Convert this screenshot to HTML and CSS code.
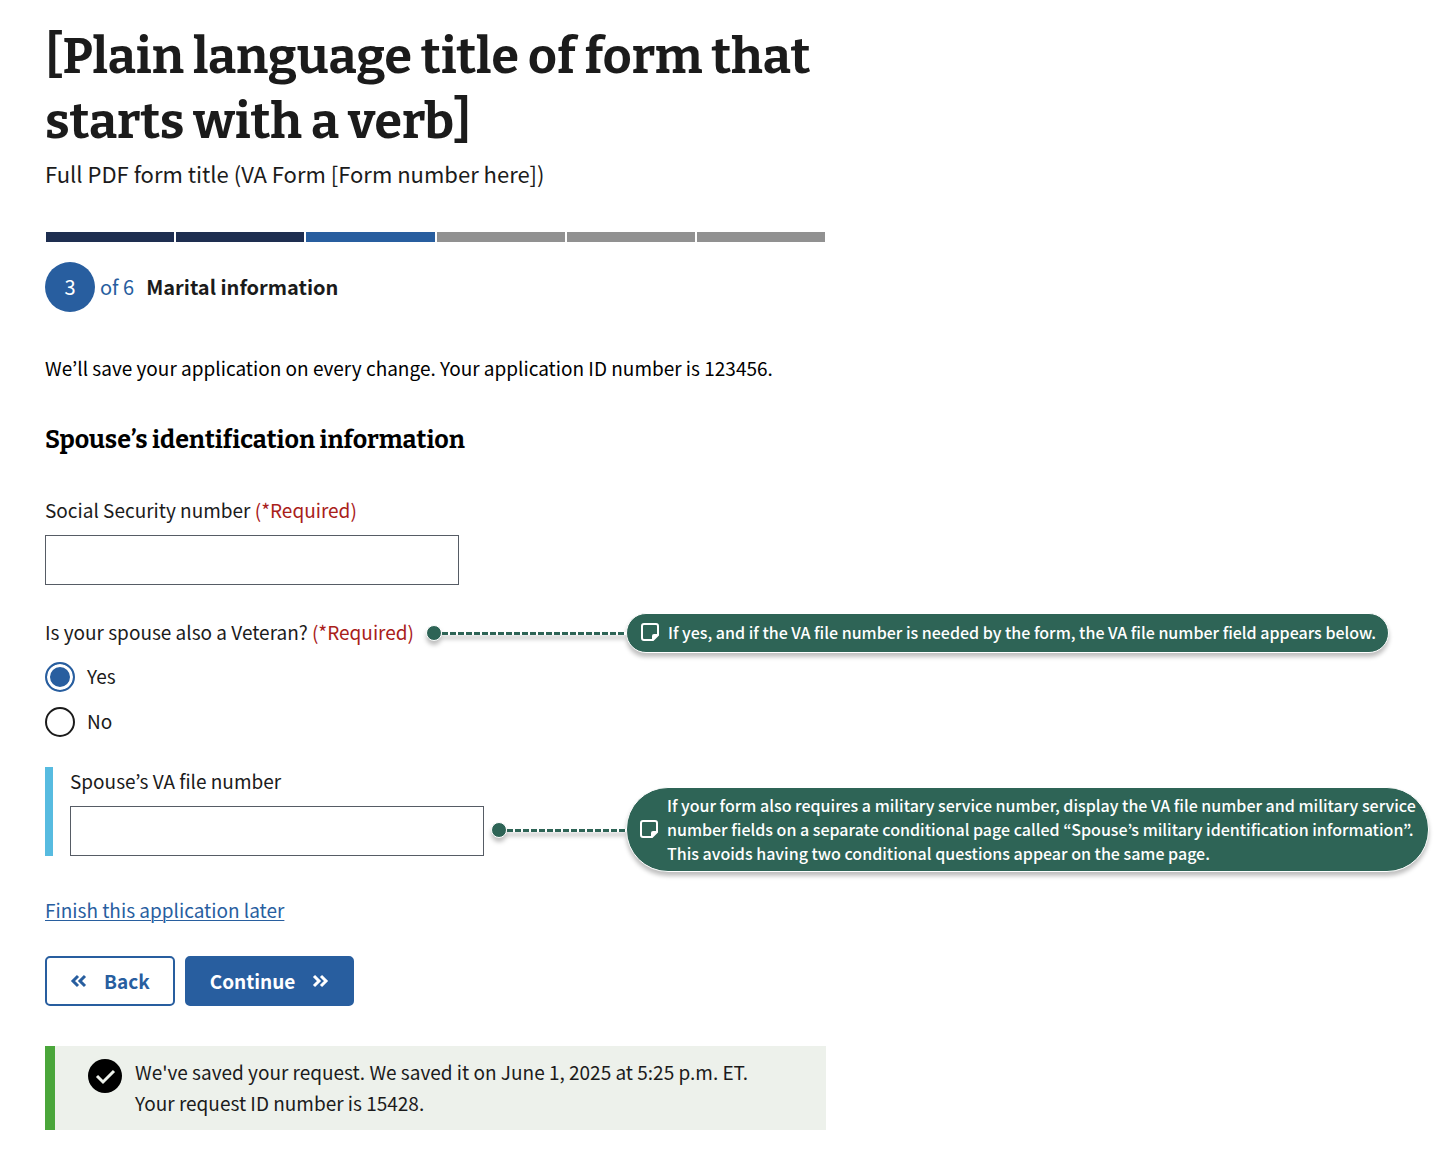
FILE: index.html
```html
<!DOCTYPE html>
<html lang="en">
<head>
  <meta charset="utf-8">
  <meta name="viewport" content="width=device-width, initial-scale=1">
  <title>Spouse’s identification information</title>
  <link rel="stylesheet" href="styles.css">
</head>
<body>
  <main class="page">
    <header class="intro">
      <h1 class="title">[Plain language title of form that starts with a verb]</h1>
      <p class="subtitle">Full PDF form title (VA Form [Form number here])</p>
    </header>

    <div class="progress" role="img" aria-label="Step 3 of 6">
      <span class="segment done"></span>
      <span class="segment done"></span>
      <span class="segment current"></span>
      <span class="segment"></span>
      <span class="segment"></span>
      <span class="segment"></span>
    </div>
    <div class="step">
      <span class="step-number">3</span>
      <span class="step-total">of 6</span>
      <strong class="step-name">Marital information</strong>
    </div>

    <p class="save-note">We’ll save your application on every change. Your application ID number is 123456.</p>

    <form class="form">
      <h2 class="section-title">Spouse’s identification information</h2>

      <div class="field">
        <label class="label" for="ssn">Social Security number <span class="required">(*Required)</span></label>
        <input class="input" id="ssn" type="text">
      </div>

      <div class="question" role="radiogroup" aria-labelledby="veteran-label">
        <div class="annotated">
          <div class="anchor">
            <span class="label" id="veteran-label">Is your spouse also a Veteran? <span class="required">(*Required)</span></span>
            <span class="connector"><span class="dot"></span><span class="dashes"></span></span>
          </div>
          <aside class="note">
            <svg class="note-icon" viewBox="0 0 18 18" aria-hidden="true"><path d="M3 1h12a2 2 0 0 1 2 2v9l-5 5H3a2 2 0 0 1-2-2V3a2 2 0 0 1 2-2z" fill="none" stroke="#fff" stroke-width="2"/><path d="M11 17v-4a2 2 0 0 1 2-2h4v1l-5 5z" fill="#fff"/></svg>
            <p class="note-text">If yes, and if the VA file number is needed by the form, the VA file number field appears below.</p>
          </aside>
        </div>
        <div class="choice">
          <input class="radio" id="veteran-yes" type="radio" name="veteran" checked>
          <label class="label" for="veteran-yes">Yes</label>
        </div>
        <div class="choice">
          <input class="radio" id="veteran-no" type="radio" name="veteran">
          <label class="label" for="veteran-no">No</label>
        </div>
      </div>

      <div class="annotated conditional-row">
        <div class="anchor anchor-field">
          <div class="conditional">
            <label class="label" for="va-file">Spouse’s VA file number</label>
            <input class="input" id="va-file" type="text">
          </div>
          <span class="connector connector-low"><span class="dot"></span><span class="dashes"></span></span>
        </div>
        <aside class="note note-tall">
          <svg class="note-icon" viewBox="0 0 18 18" aria-hidden="true"><path d="M3 1h12a2 2 0 0 1 2 2v9l-5 5H3a2 2 0 0 1-2-2V3a2 2 0 0 1 2-2z" fill="none" stroke="#fff" stroke-width="2"/><path d="M11 17v-4a2 2 0 0 1 2-2h4v1l-5 5z" fill="#fff"/></svg>
          <p class="note-text">If your form also requires a military service number, display the VA file number and military service<br>number fields on a separate conditional page called “Spouse’s military identification information”.<br>This avoids having two conditional questions appear on the same page.</p>
        </aside>
      </div>

      <a class="later" href="#later">Finish this application later</a>

      <div class="actions">
        <button class="button back" type="button">
          <svg class="chevrons" viewBox="0 0 18 14" aria-hidden="true"><path d="M8 2 3 7l5 5M15 2l-5 5 5 5"/></svg>
          Back
        </button>
        <button class="button continue" type="submit">
          Continue
          <svg class="chevrons" viewBox="0 0 18 14" aria-hidden="true"><path d="m3 2 5 5-5 5M10 2l5 5-5 5"/></svg>
        </button>
      </div>
    </form>

    <div class="alert" role="status">
      <svg class="alert-icon" viewBox="0 0 34 34" aria-hidden="true"><circle cx="17" cy="17" r="17"/><path d="m9 17 6 6 11-11" fill="none" stroke="#edf1eb" stroke-width="3"/></svg>
      <p class="alert-text">We've saved your request. We saved it on June 1, 2025 at 5:25 p.m. ET.<br>Your request ID number is 15428.</p>
    </div>
  </main>
</body>
</html>
```
FILE: styles.css
```css
* {
  box-sizing: border-box;
}

body {
  margin: 0;
  background: #fff;
  color: #1b1b1b;
  font: 400 19px/30px "Source Sans Pro", "Noto Sans CJK KR", sans-serif;
}

h1, h2, p {
  margin: 0;
}

.page {
  padding: 24px 4px 36px 45px;
}

.title {
  max-width: 782px;
  font: 700 50px/65px Bitter, "DejaVu Serif Condensed", "DejaVu Serif", serif;
}

.subtitle {
  margin-top: 3px;
  font-size: 22px;
  line-height: 32px;
}

.progress {
  display: flex;
  gap: 2px;
  max-width: 781px;
  margin-top: 43px;
  padding: 0 1px;
}

.segment {
  flex: 1;
  height: 10px;
  background: #919191;
}

.segment.done {
  background: #1e2e50;
}

.segment.current {
  background: #285e9f;
}

.step {
  display: flex;
  align-items: center;
  margin-top: 20px;
  font-size: 20px;
}

.step-number {
  width: 50px;
  border-radius: 50%;
  background: #285e9f;
  color: #fff;
  line-height: 50px;
  text-align: center;
}

.step-total {
  margin: 0 12px 0 5px;
  color: #285e9f;
}

.save-note {
  margin-top: 41px;
  color: #000;
}

.section-title {
  margin-top: 41px;
  color: #000;
  font: 700 25px/32px Bitter, "DejaVu Serif Condensed", "DejaVu Serif", serif;
}

.field {
  margin-top: 40px;
}

.label {
  display: block;
  padding-bottom: 2px;
  line-height: 28px;
}

.required {
  color: #a9201a;
}

.input {
  display: block;
  width: 414px;
  max-width: 100%;
  height: 50px;
  margin-top: 9px;
  padding: 0 10px;
  border: 1px solid #565c65;
  border-radius: 0;
  background: #fff;
  font: inherit;
}

.question {
  margin-top: 28px;
}

.annotated {
  display: flex;
  align-items: center;
}

.anchor {
  display: flex;
  flex: 0 0 581px;
  align-items: center;
  gap: 12px;
}

.anchor-field {
  gap: 7px;
}

.connector {
  display: flex;
  flex: 1;
  align-items: center;
  filter: drop-shadow(0 4px 2px rgb(0 0 0 / 25%));
}

.connector-low {
  align-self: flex-end;
  margin-bottom: 18px;
}

.dot {
  width: 16px;
  height: 16px;
  border: 1px solid #fff;
  border-radius: 50%;
  background: #2e6456;
}

.dashes {
  flex: 1;
  height: 3px;
  background: repeating-linear-gradient(90deg, #2e6456 0 6px, #fff 6px 8px);
}

.note {
  display: flex;
  align-items: center;
  gap: 9px;
  padding: 6px 12px 8px 14px;
  border: 1px solid #fff;
  border-radius: 42px;
  background: #2e6456;
  box-shadow: 0 4px 4px rgb(0 0 0 / 25%);
  color: #fff;
}

.note-tall {
  align-self: flex-end;
  margin-bottom: -16px;
  padding: 5px 12px 6px 13px;
}

.note-icon {
  flex: none;
  width: 18px;
  height: 18px;
}

.note-text {
  font-size: 16px;
  font-weight: 500;
  line-height: 24px;
  white-space: nowrap;
}

.choice {
  display: flex;
  align-items: center;
  gap: 12px;
  margin-top: 15px;
}

.question .annotated + .choice {
  margin-top: 9px;
}

.radio {
  width: 30px;
  height: 30px;
  margin: 0;
  border: 2px solid #1b1b1b;
  border-radius: 50%;
  appearance: none;
}

.radio:checked {
  border-color: #285e9f;
  background: #285e9f;
  box-shadow: inset 0 0 0 3px #fff;
}

.conditional-row {
  margin-top: 30px;
}

.conditional {
  padding-left: 17px;
  border-left: 8px solid #57bbe0;
}

.later {
  display: table;
  margin-top: 39px;
  color: #285e9f;
  text-decoration-thickness: 1px;
  text-underline-offset: 2px;
}

.actions {
  display: flex;
  gap: 10px;
  margin-top: 31px;
}

.button {
  display: flex;
  align-items: center;
  gap: 16px;
  height: 50px;
  padding: 0 23px;
  border: 2px solid #285e9f;
  border-radius: 5px;
  background: #fff;
  color: #285e9f;
  font: inherit;
  font-weight: 700;
}

.continue {
  background: #285e9f;
  color: #fff;
}

.chevrons {
  width: 18px;
  height: 14px;
  fill: none;
  stroke: currentColor;
  stroke-width: 3;
}

.alert {
  display: flex;
  gap: 13px;
  max-width: 781px;
  margin-top: 40px;
  padding: 10px 33px 12px;
  border-left: 10px solid #4aa63a;
  background: #edf1eb;
}

.alert-icon {
  flex: none;
  width: 34px;
  height: 34px;
  margin-top: 3px;
}

.alert-text {
  line-height: 31px;
}
```
